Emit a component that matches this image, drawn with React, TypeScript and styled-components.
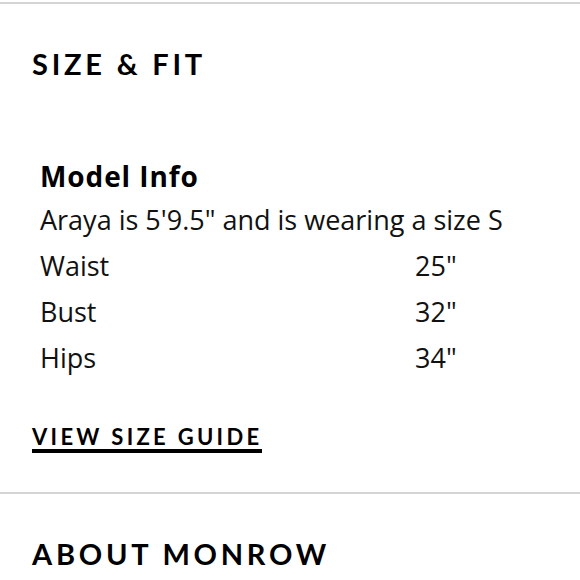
import React from "react";
import styled, { createGlobalStyle } from "styled-components";

const GlobalStyle = createGlobalStyle`
  html, body { margin: 0; padding: 0; background: #fff; }
  body { font-family: "Lato", "Open Sans", sans-serif; color: #111; }
`;

const Page = styled.div`
  padding-top: 2px;
`;

const Section = styled.section<{ $last?: boolean }>`
  border-top: 2px solid #d4d4d4;
  padding: 0 32px ${(p) => (p.$last ? "0" : "39px")};
`;

const Title = styled.h2`
  margin: 0;
  padding-top: 45px;
  font-family: "Lato", sans-serif;
  font-weight: 700;
  font-size: 29px;
  line-height: 29px;
  letter-spacing: 0.13em;
  color: #000;
`;

const Info = styled.div`
  padding: 0 8px;
  margin-top: 77px;
  font-family: "Open Sans", sans-serif;
  font-size: 27px;
  line-height: 46px;
  color: #111;
`;

const InfoHead = styled.h3`
  margin: 0;
  font-size: 28px;
  font-weight: 700;
  letter-spacing: 0.9px;
  line-height: 42px;
  color: #000;
`;

const Line = styled.p`
  margin: 0;
`;

const Row = styled.div`
  display: grid;
  grid-template-columns: 375px 1fr;
`;

const GuideLink = styled.a`
  display: inline-block;
  margin-top: 44px;
  font-family: "Lato", sans-serif;
  font-weight: 700;
  font-size: 22px;
  line-height: 24px;
  letter-spacing: 0.15em;
  color: #000;
  text-decoration: none;
  border-bottom: 4px solid #000;
`;

const measurements = [
  { label: "Waist", value: '25"' },
  { label: "Bust", value: '32"' },
  { label: "Hips", value: '34"' },
];

export default function App() {
  return (
    <Page>
      <GlobalStyle />
      <Section>
        <Title>SIZE &amp; FIT</Title>
        <Info>
          <InfoHead>Model Info</InfoHead>
          <Line>Araya is 5'9.5" and is wearing a size S</Line>
          {measurements.map((m) => (
            <Row key={m.label}>
              <span>{m.label}</span>
              <span>{m.value}</span>
            </Row>
          ))}
        </Info>
        <GuideLink href="#">VIEW SIZE GUIDE</GuideLink>
      </Section>
      <Section $last>
        <Title>ABOUT MONROW</Title>
      </Section>
    </Page>
  );
}
